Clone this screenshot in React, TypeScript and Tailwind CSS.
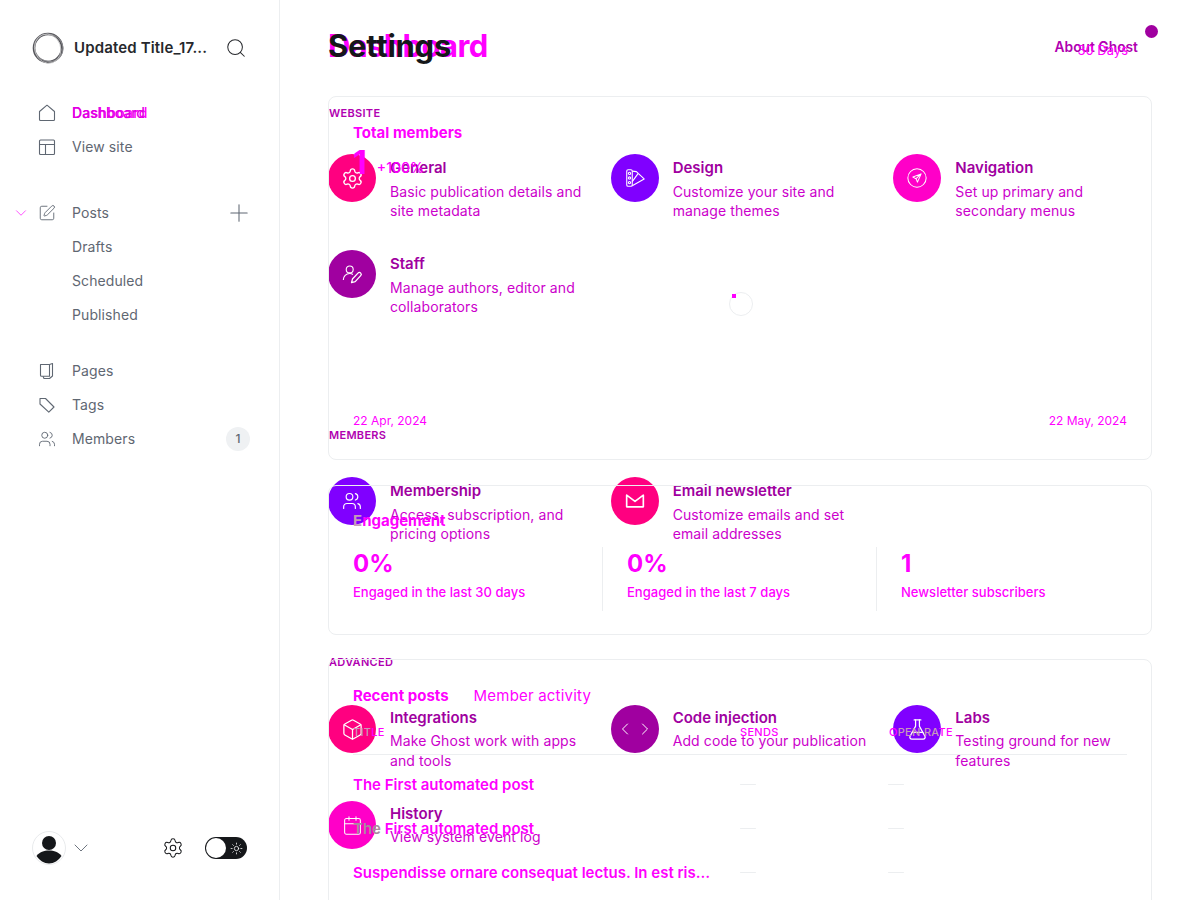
import React from 'react';
import {
  Search,
  SquarePen,
  Users,
  Plus,
  ChevronDown,
  Settings as Gear,
  Sun,
  Box,
  ChevronLeft,
  ChevronRight,
  FlaskConical,
  Calendar,
} from 'lucide-react';

const MAGENTA = 'text-[#ff00ff]';

function HomeIcon() {
  return (
    <svg width="18" height="18" viewBox="0 0 18 18" fill="none" stroke="currentColor" strokeWidth="1.100">
      <path d="M1.500 7.500 9 1.200l7.500 6.300v8a1 1 0 0 1-1 1h-13a1 1 0 0 1-1-1z" strokeLinejoin="round" />
    </svg>
  );
}

function LayoutIcon() {
  return (
    <svg width="18" height="18" viewBox="0 0 18 18" fill="none" stroke="currentColor" strokeWidth="1.100">
      <rect x="1.500" y="2" width="15" height="14.500" rx="1" />
      <path d="M1.500 6.500h15M7.500 6.500v10" />
    </svg>
  );
}

function PagesIcon() {
  return (
    <svg width="18" height="18" viewBox="0 0 18 18" fill="none" stroke="currentColor" strokeWidth="1.100" strokeLinejoin="round">
      <path d="M2.500 2.500h9v11.700H3.500a1 1 0 0 1-1-1z" />
      <path d="M11.500 2.500 14.500 1.500v12.500l-3 2.500H6l-1-2.300" />
    </svg>
  );
}

function TagIcon() {
  return (
    <svg width="18" height="18" viewBox="0 0 18 18" fill="none" stroke="currentColor" strokeWidth="1.100" strokeLinejoin="round">
      <path d="M2 2.500h5.500l8.500 8.500-5.200 5.200L2 8z" />
    </svg>
  );
}

function Logo() {
  return (
    <svg width="32" height="32" viewBox="0 0 32 32" fill="none">
      <circle cx="16" cy="16" r="14" strokeWidth="2.600" stroke="#55555a" />
      <ellipse cx="16.500" cy="15.500" rx="14.500" ry="13.500" strokeWidth="1" stroke="#8a8a8e" transform="rotate(30 16 16)" />
      <ellipse cx="15.500" cy="16.500" rx="13" ry="14.800" strokeWidth="0.800" stroke="#c4c4c6" transform="rotate(-20 16 16)" />
    </svg>
  );
}

function Avatar() {
  return (
    <svg width="34" height="34" viewBox="0 0 34 34">
      <circle cx="17" cy="17" r="16.500" fill="#fff" stroke="#e8eaec" />
      <circle cx="17" cy="12" r="7" fill="#15171a" />
      <path d="M4.500 25c3-4 7.500-5.500 12.500-5.500S26.500 21 29.500 25c-3 4.500-7.500 7.500-12.500 7.500S7.500 29.500 4.500 25z" fill="#15171a" />
    </svg>
  );
}

function SwatchIcon() {
  return (
    <svg width="22" height="22" viewBox="0 0 24 24" fill="none" stroke="currentColor" strokeWidth="1.200">
      <rect x="3" y="3" width="6" height="18" rx="1.500" />
      <circle cx="6" cy="7" r="1.200" />
      <circle cx="6" cy="12" r="1.200" />
      <circle cx="6" cy="17" r="1.200" />
      <path d="M9 4.500l4.500.5 2 2M9 20.500 22 13 15.500 7 9 16" strokeLinejoin="round" />
    </svg>
  );
}

function SendCircleIcon() {
  return (
    <svg width="22" height="22" viewBox="0 0 24 24" fill="none" stroke="currentColor" strokeWidth="1.100">
      <circle cx="12" cy="12" r="10" />
      <path d="M16.500 7.500 7.500 11l3.500 1.800 1.500 3.700zM11 12.800l5.500-5.300" strokeLinejoin="round" />
    </svg>
  );
}

function UserPenIcon() {
  return (
    <svg width="22" height="22" viewBox="0 0 24 24" fill="none" stroke="currentColor" strokeWidth="1.200">
      <circle cx="9.500" cy="7" r="3.800" />
      <path d="M2.500 18.500c0-4 3-7 7-7 1.500 0 2.500.3 3.500 1" />
      <path d="M11.500 21.500l1-4 6-6.500c1-1 2.200-.8 3 0s.8 2 0 2.800l-6 6.500z" strokeLinejoin="round" strokeWidth="1.400" />
    </svg>
  );
}

function MailIcon() {
  return (
    <svg width="20" height="20" viewBox="0 0 24 24" fill="none" stroke="currentColor" strokeWidth="2">
      <path d="M2 5l10 7.500L22 5v14H2z" strokeLinejoin="round" />
    </svg>
  );
}

function CodeIcon() {
  return (
    <span className="flex items-center">
      <ChevronLeft size={20} strokeWidth={1.200} />
      <ChevronRight size={20} strokeWidth={1.200} />
    </span>
  );
}

function Spinner() {
  return (
    <svg width="26" height="26" viewBox="0 0 26 26" fill="none">
      <circle cx="14" cy="14" r="11.500" stroke="#eceef0" strokeWidth="1" />
      <rect x="5" y="4" width="4" height="4" fill="#ff00ff" />
    </svg>
  );
}

type NavRow = { label: string; icon: React.ReactNode; badge?: string };

function NavItem({ label, icon, badge }: NavRow) {
  return (
    <div className="flex h-[34px] items-center pl-[38px] pr-[29px] text-[14px] tracking-[0.1px] text-[#5f6772]">
      <span className="mr-[16px] flex w-[18px] justify-center">{icon}</span>
      <span className="mb-[2px]">{label}</span>
      {badge && (
        <span className="ml-auto flex h-[24px] w-[24px] items-center justify-center rounded-full bg-[#eff1f3] text-[12px] font-medium">
          {badge}
        </span>
      )}
    </div>
  );
}

function Sidebar() {
  return (
    <aside className="flex h-[900px] w-[280px] shrink-0 flex-col border-r border-[#eceef0] pt-[32px] pb-[36px]">
      <div className="flex h-[32px] items-center pl-[32px] pr-[32px]">
        <Logo />
        <span className="ml-[10px] text-[15px] font-semibold tracking-[0.15px] text-[#26282c]">Updated Title_17...</span>
        <Search size={22} strokeWidth={1.100} className="ml-auto text-[#26282c]" />
      </div>

      <nav className="mt-[32px]">
        <div className="flex h-[34px] items-center pl-[38px] text-[14px] text-[#5f6772]">
          <span className="mr-[16px] flex w-[18px] justify-center"><HomeIcon /></span>
          <span className="mb-[2px] grid">
            <span className={`col-start-1 row-start-1 font-medium tracking-[0.3px] ${MAGENTA}`}>Dashboard</span>
            <span className="col-start-1 row-start-1 font-medium text-[#e000e0]">Dashboard</span>
          </span>
        </div>
        <NavItem label="View site" icon={<LayoutIcon />} />
      </nav>

      <nav className="mt-[32px]">
        <div className="flex h-[34px] items-center pl-[12px] pr-[26px] text-[14px] tracking-[0.1px] text-[#5f6772]">
          <ChevronDown size={18} strokeWidth={0.900} className={`mr-[8px] ${MAGENTA}`} />
          <span className="mr-[16px] flex w-[18px] justify-center"><SquarePen size={18} strokeWidth={1.200} /></span>
          <span className="mb-[2px]">Posts</span>
          <Plus size={28} strokeWidth={0.900} className="ml-auto" />
        </div>
        {['Drafts', 'Scheduled', 'Published'].map((s) => (
          <div key={s} className="flex h-[34px] items-center pb-[2px] pl-[72px] text-[14px] tracking-[0.1px] text-[#5f6772]">{s}</div>
        ))}
      </nav>

      <nav className="mt-[22px]">
        <NavItem label="Pages" icon={<PagesIcon />} />
        <NavItem label="Tags" icon={<TagIcon />} />
        <NavItem label="Members" icon={<Users size={18} strokeWidth={1.200} />} badge="1" />
      </nav>

      <div className="mt-auto flex h-[32px] items-center pl-[32px] pr-[32px]">
        <Avatar />
        <ChevronDown size={24} strokeWidth={0.900} className="ml-[3px] text-[#5f6772]" />
        <Gear size={22} strokeWidth={1.100} className="ml-auto text-[#15171a]" />
        <div className="ml-[21px] flex h-[22px] w-[42px] items-center justify-between rounded-full bg-[#15171a] pl-[1px] pr-[4px]">
          <span className="h-[20px] w-[20px] rounded-full bg-white" />
          <Sun size={13} strokeWidth={1.400} className="text-white" />
        </div>
      </div>
    </aside>
  );
}

const websiteItems = [
  { title: 'General', desc: 'Basic publication details and site metadata', bg: 'bg-[#ff0080]', icon: <Gear size={23} strokeWidth={1.400} /> },
  { title: 'Design', desc: 'Customize your site and manage themes', bg: 'bg-[#8000ff]', icon: <SwatchIcon /> },
  { title: 'Navigation', desc: 'Set up primary and secondary menus', bg: 'bg-[#ff00c8]', icon: <SendCircleIcon /> },
  { title: 'Staff', desc: 'Manage authors, editor and collaborators', bg: 'bg-[#a000a0]', icon: <UserPenIcon /> },
];

const memberItems = [
  { title: 'Membership', desc: 'Access, subscription, and pricing options', bg: 'bg-[#8000ff]', icon: <Users size={20} strokeWidth={1.400} /> },
  { title: 'Email newsletter', desc: 'Customize emails and set email addresses', bg: 'bg-[#ff0080]', icon: <MailIcon /> },
];

const advancedItems = [
  { title: 'Integrations', desc: 'Make Ghost work with apps and tools', bg: 'bg-[#ff0080]', icon: <Box size={23} strokeWidth={1.300} /> },
  { title: 'Code injection', desc: 'Add code to your publication', bg: 'bg-[#a000a0]', icon: <CodeIcon /> },
  { title: 'Labs', desc: 'Testing ground for new features', bg: 'bg-[#8000ff]', icon: <FlaskConical size={23} strokeWidth={1.300} /> },
  { title: 'History', desc: 'View system event log', bg: 'bg-[#ff00c8]', icon: <Calendar size={21} strokeWidth={1.200} /> },
];

type SettingItem = (typeof websiteItems)[number];

function SettingsGrid({ items, tight }: { items: SettingItem[]; tight?: boolean }) {
  return (
    <div className="grid grid-cols-3 gap-x-6 gap-y-[29px]">
      {items.map((it) => (
        <div key={it.title} className="flex h-[67px] gap-[14px]">
          <div className={`flex h-[48px] w-[48px] shrink-0 items-center justify-center rounded-full text-white ${it.bg}`}>
            {it.icon}
          </div>
          <div className={tight ? 'pt-[3px]' : 'pt-[4px]'}>
            <div className="text-[15px] font-semibold leading-5 text-[#a000a0]">{it.title}</div>
            <div className={`${tight ? 'mt-[3px] leading-[20px]' : 'mt-[4px] leading-[19px]'} text-[14px] tracking-[0.1px] text-[#cc00cc]`}>{it.desc}</div>
          </div>
        </div>
      ))}
    </div>
  );
}

function SectionLabel({ children }: { children: React.ReactNode }) {
  return <div className="px-px text-[11px] font-semibold uppercase leading-4 tracking-[0.3px] text-[#b000b0]">{children}</div>;
}

function SettingsLayer() {
  return (
    <div className="col-start-1 row-start-1 pt-[24px]">
      <div className="flex h-[44px] items-start justify-between">
        <h1 className="relative z-10 text-[31px] font-bold leading-[44px] tracking-[-0.25px] text-[#15171a]">Settings</h1>
        <div className="-mr-[6px] flex items-start gap-[7px]">
          <span className="mt-[13px] text-[13.800px] font-semibold leading-5 text-[#b000b0]">About Ghost</span>
          <span className="mt-[1px] h-[13px] w-[13px] rounded-full bg-[#a000a0]" />
        </div>
      </div>
      <div className="mt-[37px]"><SectionLabel>Website</SectionLabel></div>
      <div className="mt-[33px]"><SettingsGrid items={websiteItems} /></div>
      <div className="mt-[110px]"><SectionLabel>Members</SectionLabel></div>
      <div className="mt-[34px]"><SettingsGrid items={memberItems} /></div>
      <div className="mt-[110px]"><SectionLabel>Advanced</SectionLabel></div>
      <div className="mt-[35px]"><SettingsGrid items={advancedItems} tight /></div>
    </div>
  );
}

const engagement = [
  { value: '0%', label: 'Engaged in the last 30 days' },
  { value: '0%', label: 'Engaged in the last 7 days' },
  { value: '1', label: 'Newsletter subscribers' },
];

const GREY_OVER_CIRCLE = 'text-[#c79ab8]';

function DashboardLayer() {
  return (
    <div className={`col-start-1 row-start-1 pt-[24px] ${MAGENTA}`}>
      <div className="flex h-[44px] items-center justify-between">
        <h1 className="text-[31px] font-bold leading-[44px] tracking-[-0.63px]">Dashboard</h1>
        <span className="mr-[24px] mt-[10px] text-[13px]">30 Days</span>
      </div>

      {/* total members */}
      <section className="mt-[28px] flex h-[364px] flex-col rounded-lg border border-[#eceef0] px-[24px] pt-[26px] pb-[30px]">
        <h2 className="text-[15px] font-bold leading-5">Total members</h2>
        <div className="mt-[4px] flex h-[32px] items-center gap-[10px]">
          <span className="text-[32px] font-bold leading-8">1</span>
          <span className="mt-[8px] text-[14px] font-medium">+100%</span>
        </div>
        <div className="flex flex-1 items-center justify-center pt-[14px]"><Spinner /></div>
        <div className="flex justify-between text-[12px] leading-4">
          <span>22 Apr, 2024</span>
          <span>22 May, 2024</span>
        </div>
      </section>

      {/* engagement */}
      <section className="mt-[25px] h-[150px] rounded-lg border border-[#eceef0] px-[24px] pt-[25px]">
        <h2 className="text-[15px] font-bold leading-5"><span className={GREY_OVER_CIRCLE}>E</span>ngagement</h2>
        <div className="mt-[16px] grid h-[64px] grid-cols-[250px_274px_250px]">
          {engagement.map((e, i) => (
            <div key={i} className={i === 0 ? 'border-r border-[#eceef0]' : i === 1 ? 'border-r border-[#eceef0] pl-[24px]' : 'pl-[24px]'}>
              <div className="text-[24px] font-bold leading-[34px]">{e.value}</div>
              <div className="mt-[3px] text-[13px] font-medium leading-4 tracking-[0.03px]">{e.label}</div>
            </div>
          ))}
        </div>
      </section>

      {/* recent posts */}
      <section className="mt-[24px] h-[300px] rounded-lg border border-[#eceef0] px-[24px] pt-[26px]">
        <div className="flex gap-[25px] text-[15px] leading-5">
          <span className="font-bold">Recent posts</span>
          <span className="tracking-[0.2px]">Member activity</span>
        </div>
        <div className="mt-[14px] grid h-[35px] grid-cols-[387px_148px_1fr] border-b border-[#eceef0] pt-[4px] text-[11px] font-medium uppercase leading-4 tracking-[0.3px]">
          <span><span className={GREY_OVER_CIRCLE}>Tit</span>le</span>
          <span>Sends</span>
          <span className="pl-px">O<span className={GREY_OVER_CIRCLE}>pen ra</span>te</span>
        </div>
        {[
          <>The First automated post</>,
          <><span className="text-[#a78a9e]">The</span> First automated post</>,
          <>Suspendisse ornare consequat lectus. In est ris…</>,
        ].map((p, i) => (
          <div key={i} className="grid h-[44px] grid-cols-[387px_148px_1fr] items-center pt-[15px] text-[15px] font-semibold">
            <span className="leading-5">{p}</span>
            <span className="h-px w-[16px] rounded-full bg-[#eceef0]" />
            <span className="h-px w-[16px] rounded-full bg-[#eceef0]" />
          </div>
        ))}
      </section>
    </div>
  );
}

export default function App() {
  return (
    <div className="flex h-[900px] w-[1200px] overflow-hidden bg-white font-['Inter',sans-serif]">
      <Sidebar />
      <main className="grid h-[900px] w-[920px] grid-cols-1 content-start overflow-hidden pl-[48px] pr-[48px]">
        <SettingsLayer />
        <DashboardLayer />
      </main>
    </div>
  );
}
